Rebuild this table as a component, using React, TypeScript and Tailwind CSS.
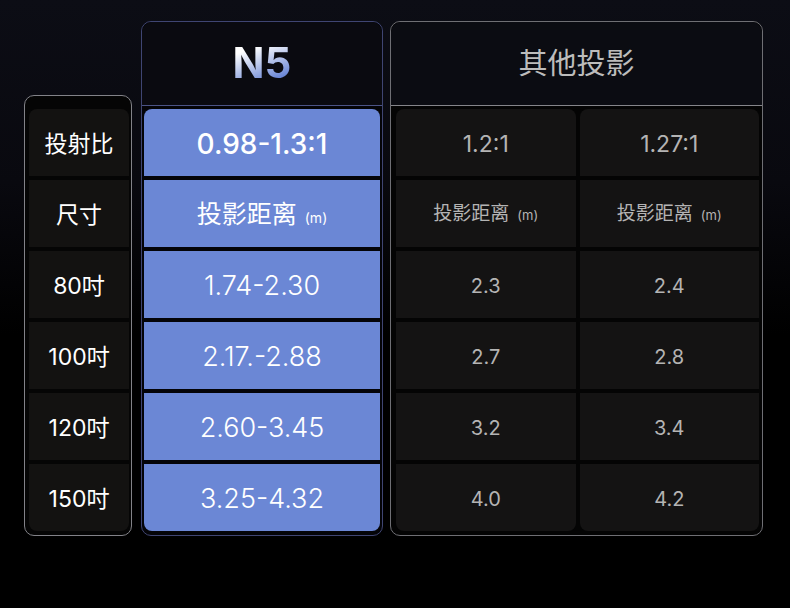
const labels = ["投射比", "尺寸", "80吋", "100吋", "120吋", "150吋"]
const n5 = ["1.74-2.30", "2.17.-2.88", "2.60-3.45", "3.25-4.32"]
const others = [
  ["2.3", "2.4"],
  ["2.7", "2.8"],
  ["3.2", "3.4"],
  ["4.0", "4.2"],
]

const font = { fontFamily: 'Inter, "Noto Sans CJK SC", sans-serif' }

function Distance({ big }: { big?: boolean }) {
  return (
    <span className={big ? "text-[25px] text-white" : "text-[19px] text-[#b4b4b4]"}>
      投影距离
      <span className={big ? "ml-2 text-[14px]" : "ml-2 text-[13px]"}>(m)</span>
    </span>
  )
}

export default function App() {
  return (
    <div
      className="w-[790px] h-[608px] bg-[linear-gradient(to_bottom,#0c0d15_0%,#09090f_30%,#000_55%)]"
      style={font}
    >
      <div className="flex items-end pl-[24px] pt-[21px]">
        {/* labels column */}
        <div className="w-[108px] h-[441px] rounded-[10px] border border-[#828288] bg-[#050505] pl-[4px] pr-[2px] pt-[13px]">
          <div className="flex flex-col gap-[4px]">
            {labels.map((l, i) => (
              <div
                key={l}
                className={
                  "h-[67px] pt-[3px] flex items-center justify-center bg-[#131211] text-white text-[23px] " +
                  (i === 0 ? "rounded-t-[8px]" : "") +
                  (i === labels.length - 1 ? "rounded-b-[8px]" : "")
                }
              >
                {l}
              </div>
            ))}
          </div>
        </div>

        {/* N5 column */}
        <div className="ml-[9px] w-[242px] h-[515px] rounded-[10px] border border-[#3f4572] bg-[#040408] flex flex-col">
          <div className="h-[84px] flex items-center justify-center border-b border-[#4c5486] bg-[#0a0a10] rounded-t-[10px]">
            <span className="text-[42px] font-bold bg-[linear-gradient(160deg,#ffffff_20%,#6b87d6_80%)] bg-clip-text text-transparent leading-none pb-[2px]">
              N5
            </span>
          </div>
          <div className="flex flex-col gap-[4px] px-[2px] pt-[3px]">
            <div className="h-[67px] pt-[3px] rounded-t-[8px] bg-[#6b87d5] flex items-center justify-center text-white text-[28px] font-medium">
              0.98-1.3:1
            </div>
            <div className="h-[67px] pt-[2px] bg-[#6b87d5] flex items-center justify-center">
              <Distance big />
            </div>
            {n5.map((v, i) => (
              <div
                key={v}
                className={
                  "h-[67px] pt-[3px] bg-[#6b87d5] flex items-center justify-center text-white text-[27px] font-light " +
                  (i === n5.length - 1 ? "rounded-b-[8px]" : "")
                }
              >
                {v}
              </div>
            ))}
          </div>
        </div>

        {/* other projectors column */}
        <div className="ml-[7px] w-[373px] h-[515px] rounded-[10px] border border-[#6f6f74] bg-[#040404] flex flex-col">
          <div className="h-[84px] flex items-center justify-center border-b border-[#85858a] bg-[#0b0c12] rounded-t-[10px]">
            <span className="text-[29px] text-[#bcbcbc]">其他投影</span>
          </div>
          <div className="grid grid-cols-2 gap-[4px] pl-[5px] pr-[3px] pt-[3px]">
            {[0, 1].map((c) => (
              <div key={c} className="flex flex-col gap-[4px]">
                <div className="h-[67px] pt-[3px] rounded-t-[8px] bg-[#141313] flex items-center justify-center text-[#b4b4b4] text-[23px]">
                  {c === 0 ? "1.2:1" : "1.27:1"}
                </div>
                <div className="h-[67px] pt-[2px] bg-[#141313] flex items-center justify-center">
                  <Distance />
                </div>
                {others.map((r, i) => (
                  <div
                    key={i}
                    className={
                      "h-[67px] pt-[3px] bg-[#141313] flex items-center justify-center text-[#b4b4b4] text-[20px] " +
                      (i === others.length - 1 ? "rounded-b-[8px]" : "")
                    }
                  >
                    {r[c]}
                  </div>
                ))}
              </div>
            ))}
          </div>
        </div>
      </div>
    </div>
  )
}
